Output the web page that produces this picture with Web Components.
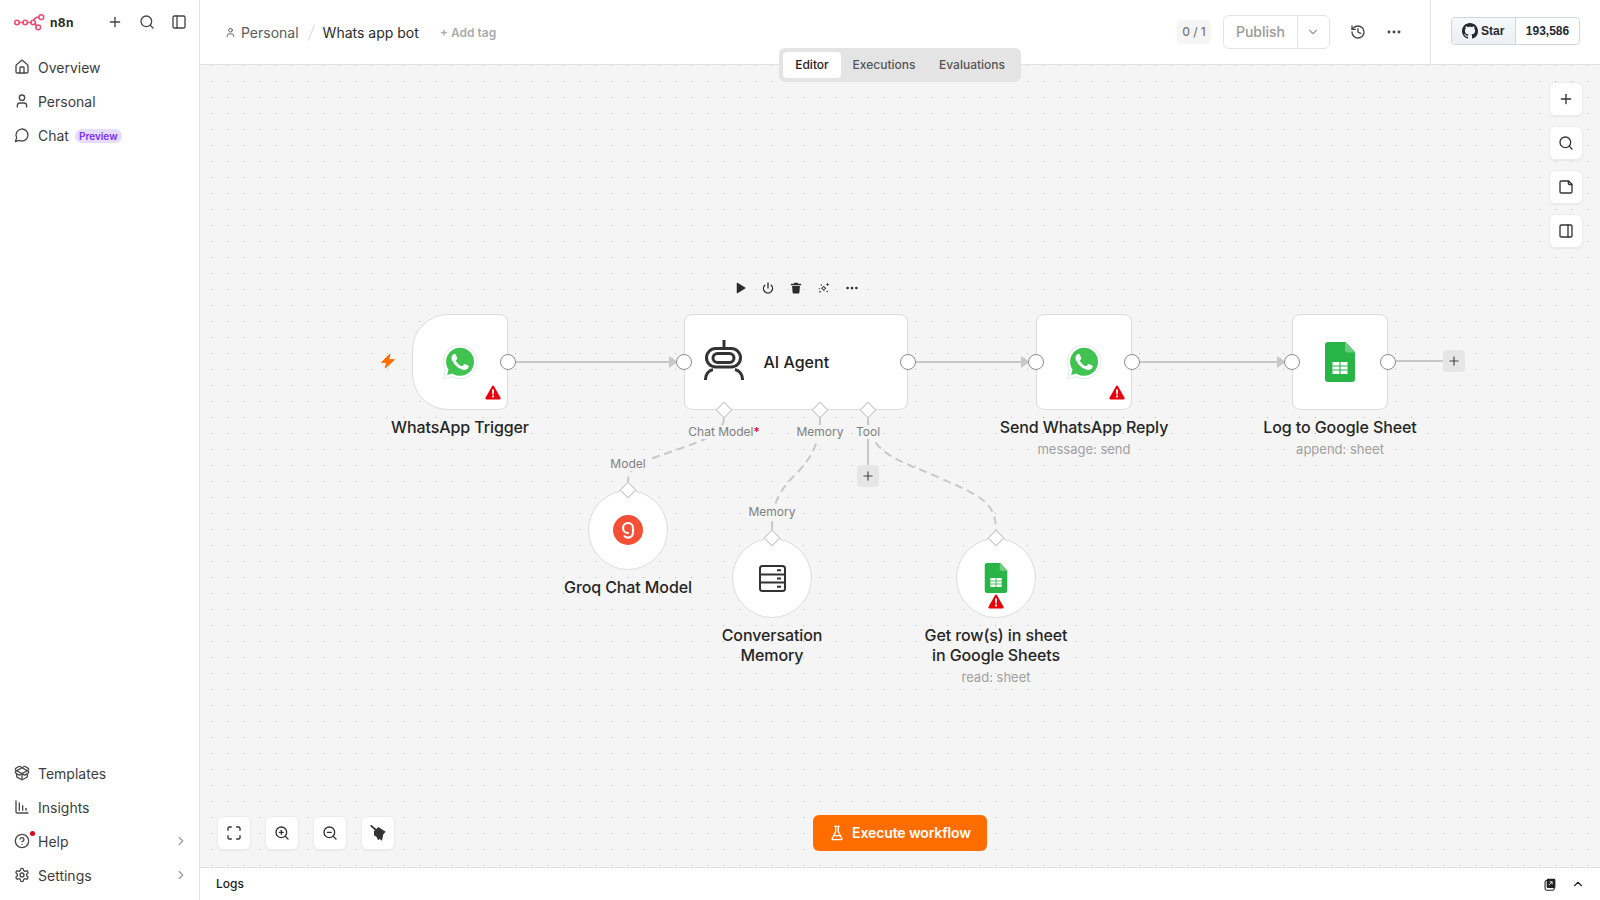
<!DOCTYPE html>
<html lang="en"><head><meta charset="utf-8"><title>Whats app bot - n8n</title>
<style>
html,body{margin:0;height:100%;overflow:hidden;background:#fff;font-family:Inter,"Liberation Sans",sans-serif;color:#333}
</style></head>
<body>
<n8n-app>
  <app-sidebar slot="side">
    <nav-item slot="top" icon="house">Overview</nav-item>
    <nav-item slot="top" icon="user">Personal</nav-item>
    <nav-item slot="top" icon="chat">Chat<ui-badge slot="after">Preview</ui-badge></nav-item>
    <nav-item slot="bottom" icon="package">Templates</nav-item>
    <nav-item slot="bottom" icon="chart">Insights</nav-item>
    <nav-item slot="bottom" icon="help" dot chevron>Help</nav-item>
    <nav-item slot="bottom" icon="settings" chevron>Settings</nav-item>
  </app-sidebar>
  <app-header slot="head"></app-header>
  <tab-switch slot="tabs"></tab-switch>
  <wf-canvas slot="canvas">
    <wf-edges></wf-edges>
    <wf-tag x="724" y="432">Chat Model<b style="color:#e8002a;font-weight:500">*</b></wf-tag>
    <wf-tag x="820" y="432">Memory</wf-tag>
    <wf-tag x="868" y="432">Tool</wf-tag>
    <wf-tag x="628" y="464">Model</wf-tag>
    <wf-tag x="772" y="512">Memory</wf-tag>

    <wf-node x="412" y="314" w="96" h="96" shape="trigger" warn="corner"><ui-icon slot="icon" name="whatsapp" size="34"></ui-icon>WhatsApp Trigger</wf-node>
    <wf-node x="684" y="314" w="224" h="96" shape="wide"><ui-icon slot="icon" name="robot" size="40" style="margin-top:-4px"></ui-icon><span slot="inline">AI Agent</span></wf-node>
    <wf-node x="1036" y="314" w="96" h="96" warn="corner"><ui-icon slot="icon" name="whatsapp" size="34"></ui-icon>Send WhatsApp Reply<span slot="sub">message: send</span></wf-node>
    <wf-node x="1292" y="314" w="96" h="96"><ui-icon slot="icon" name="sheets" size="40"></ui-icon>Log to Google Sheet<span slot="sub">append: sheet</span></wf-node>
    <wf-node x="588" y="490" w="80" h="80" shape="circle"><ui-icon slot="icon" name="groq" size="30"></ui-icon>Groq Chat Model</wf-node>
    <wf-node x="732" y="538" w="80" h="80" shape="circle"><ui-icon slot="icon" name="db" size="27"></ui-icon>Conversation<br>Memory</wf-node>
    <wf-node x="956" y="538" w="80" h="80" shape="circle" warn="center"><ui-icon slot="icon" name="sheets" size="30"></ui-icon>Get row(s) in sheet<br>in Google Sheets<span slot="sub">read: sheet</span></wf-node>

    <wf-port x="508" y="362"></wf-port><wf-port x="684" y="362"></wf-port><wf-port x="908" y="362"></wf-port>
    <wf-port x="1036" y="362"></wf-port><wf-port x="1132" y="362"></wf-port><wf-port x="1292" y="362"></wf-port><wf-port x="1388" y="362"></wf-port>
    <wf-port x="724" y="410" diamond></wf-port><wf-port x="820" y="410" diamond></wf-port><wf-port x="868" y="410" diamond></wf-port>
    <wf-port x="628" y="490" diamond></wf-port><wf-port x="772" y="538" diamond></wf-port><wf-port x="996" y="538" diamond></wf-port>

    <wf-add x="868" y="476"></wf-add><wf-add x="1454" y="361"></wf-add>
    <wf-bolt></wf-bolt>
    <node-toolbar></node-toolbar>

    <ctl-group side="right">
      <ctl-btn icon="plus"></ctl-btn><ctl-btn icon="search"></ctl-btn><ctl-btn icon="note"></ctl-btn><ctl-btn icon="panelright"></ctl-btn>
    </ctl-group>
    <ctl-group side="left">
      <ctl-btn icon="fit"></ctl-btn><ctl-btn icon="zoomin"></ctl-btn><ctl-btn icon="zoomout"></ctl-btn><ctl-btn icon="broom"></ctl-btn>
    </ctl-group>
    <exec-button>Execute workflow</exec-button>
  </wf-canvas>
  <logs-bar slot="logs"></logs-bar>
</n8n-app>

<script>
const S=(d,extra='')=>`<g fill="none" stroke="currentColor" stroke-width="2" stroke-linecap="round" stroke-linejoin="round" ${extra}>${d}</g>`;
const L=(...p)=>p.map(x=>x[0]==='<'?x:`<path d="${x}"/>`).join('');
const ICONS={
 plus:[24,S(L('M5 12h14','M12 5v14'))],
 search:[24,S(L('<circle cx="11" cy="11" r="8"/>','m21 21-4.3-4.3'))],
 panelleft:[24,S(L('<rect x="3" y="3" width="18" height="18" rx="2"/>','M9 3v18'))],
 panelright:[24,S(L('<rect x="3" y="3" width="18" height="18" rx="2"/>','M15 3v18'))],
 house:[24,S(L('M15 21v-8a1 1 0 0 0-1-1h-4a1 1 0 0 0-1 1v8','M3 10a2 2 0 0 1 .709-1.528l7-5.999a2 2 0 0 1 2.582 0l7 5.999A2 2 0 0 1 21 10v9a2 2 0 0 1-2 2H5a2 2 0 0 1-2-2z'))],
 user:[24,S(L('M19 21v-2a4 4 0 0 0-4-4H9a4 4 0 0 0-4 4v2','<circle cx="12" cy="7" r="4"/>'))],
 chat:[24,S(L('M7.9 20A9 9 0 1 0 4 16.1L2 22Z'))],
 package:[24,S(L('M12 22v-9','M15.17 2.21a1.67 1.67 0 0 1 1.63 0L21 4.57a1.93 1.93 0 0 1 0 3.36L8.82 14.79a1.655 1.655 0 0 1-1.64 0L3 12.43a1.93 1.93 0 0 1 0-3.36z','M20 13v3.87a2.06 2.06 0 0 1-1.11 1.83l-6 3.08a1.93 1.93 0 0 1-1.78 0l-6-3.08A2.06 2.06 0 0 1 4 16.87V13','M21 12.43a1.93 1.93 0 0 0 0-3.36L8.83 2.2a1.64 1.64 0 0 0-1.63 0L3 4.57a1.93 1.93 0 0 0 0 3.36l12.18 6.86a1.636 1.636 0 0 0 1.63 0z'))],
 chart:[24,S(L('M3 3v16a2 2 0 0 0 2 2h16','M8 17V6','M13 17v-7','M18 17v-3'))],
 help:[24,S(L('<circle cx="12" cy="12" r="10"/>','M9.09 9a3 3 0 0 1 5.83 1c0 2-3 3-3 3','M12 17h.01'))],
 settings:[24,S(L('M12.22 2h-.44a2 2 0 0 0-2 2v.18a2 2 0 0 1-1 1.73l-.43.25a2 2 0 0 1-2 0l-.15-.08a2 2 0 0 0-2.73.73l-.22.38a2 2 0 0 0 .73 2.73l.15.1a2 2 0 0 1 1 1.72v.51a2 2 0 0 1-1 1.74l-.15.09a2 2 0 0 0-.73 2.73l.22.38a2 2 0 0 0 2.73.73l.15-.08a2 2 0 0 1 2 0l.43.25a2 2 0 0 1 1 1.73V20a2 2 0 0 0 2 2h.44a2 2 0 0 0 2-2v-.18a2 2 0 0 1 1-1.73l.43-.25a2 2 0 0 1 2 0l.15.08a2 2 0 0 0 2.73-.73l.22-.39a2 2 0 0 0-.73-2.73l-.15-.08a2 2 0 0 1-1-1.74v-.5a2 2 0 0 1 1-1.74l.15-.09a2 2 0 0 0 .73-2.73l-.22-.38a2 2 0 0 0-2.73-.73l-.15.08a2 2 0 0 1-2 0l-.43-.25a2 2 0 0 1-1-1.73V4a2 2 0 0 0-2-2z','<circle cx="12" cy="12" r="3"/>'))],
 right:[24,S(L('m9 18 6-6-6-6'))],
 down:[24,S(L('m6 9 6 6 6-6'))],
 up:[24,S(L('m18 15-6-6-6 6'))],
 history:[24,S(L('M3 12a9 9 0 1 0 9-9 9.75 9.75 0 0 0-6.74 2.74L3 8','M3 3v5h5','M12 7v5l4 2'))],
 dots:[24,'<g fill="currentColor"><circle cx="4.5" cy="12" r="2.2"/><circle cx="12" cy="12" r="2.2"/><circle cx="19.5" cy="12" r="2.2"/></g>'],
 note:[24,S(L('M16 3H5a2 2 0 0 0-2 2v14a2 2 0 0 0 2 2h14a2 2 0 0 0 2-2V8Z','M15.5 3.5v2a3 3 0 0 0 3 3h2'))],
 fit:[24,S(L('M8 3H5a2 2 0 0 0-2 2v3','M21 8V5a2 2 0 0 0-2-2h-3','M3 16v3a2 2 0 0 0 2 2h3','M16 21h3a2 2 0 0 0 2-2v-3'))],
 zoomin:[24,S(L('<circle cx="11" cy="11" r="8"/>','m21 21-4.3-4.3','M11 8v6','M8 11h6'))],
 zoomout:[24,S(L('<circle cx="11" cy="11" r="8"/>','m21 21-4.3-4.3','M8 11h6'))],
 broom:[24,'<path d="M1.8 1.2 9 7.5" stroke="currentColor" stroke-width="2.6" stroke-linecap="round"/><path fill="currentColor" d="M6 9.500 12.500 3 23.500 10 20 14 18 23.500 14.500 21 12 23 10 18 6 15.500Z"/>'],
 flask:[24,S(L('M10 2v7.527a2 2 0 0 1-.211.896L4.72 20.55a1 1 0 0 0 .9 1.45h12.76a1 1 0 0 0 .9-1.45l-5.069-10.127A2 2 0 0 1 14 9.527V2','M8.5 2h7','M7 16h10'))],
 popout:[24,'<rect x="2" y="4.5" width="17" height="18" rx="3" fill="#fff" stroke="currentColor" stroke-width="2"/><rect x="5" y="1.5" width="16" height="17" rx="2" fill="currentColor"/><path d="M9 13l6-6M10.5 7H15v4.5" fill="none" stroke="#fff" stroke-width="1.6"/>'],
 play:[24,'<path fill="currentColor" d="M5.5 2.4v19.2a1 1 0 0 0 1.5.85l15.4-9.6a1 1 0 0 0 0-1.7L7 1.55a1 1 0 0 0-1.5.85Z"/>'],
 power:[24,S(L('M12 2v10','M18.4 6.6a9 9 0 1 1-12.77.04'),'style="stroke-width:2.6"')],
 trash:[24,'<path fill="currentColor" d="M8.6 1.5h6.8l.7 1.8H21a1 1 0 0 1 0 3H3a1 1 0 0 1 0-3h4.9ZM4.2 8h15.6l-1 13.2a2 2 0 0 1-2 1.8H7.2a2 2 0 0 1-2-1.8Z"/>'],
 sparkle:[24,'<g fill="currentColor"><path d="M11.500 8 13 11 16 12.500 13 14 11.500 17 10 14 7 12.500 10 11Z" fill="none" stroke="currentColor" stroke-width="2" stroke-linejoin="round"/><path d="M19 1.500l1.200 2.300 2.300 1.200-2.300 1.200L19 8.500l-1.200-2.300L15.500 5l2.300-1.200Z"/><circle cx="6.500" cy="6" r="1.300"/><circle cx="4" cy="19.500" r="1.700"/><circle cx="18.500" cy="19" r="1.500"/><circle cx="2.500" cy="13" r="1"/></g>'],
 user2:[24,S(L('M19 21v-2a4 4 0 0 0-4-4H9a4 4 0 0 0-4 4v2','<circle cx="12" cy="7" r="4"/>'))],
 bolt:[24,'<path fill="currentColor" stroke="currentColor" stroke-width="1.500" stroke-linejoin="round" d="M15 1.500 2.500 14H10L8 22.500 21.500 10H13Z"/>'],
 warn:[16,'<path fill="#e8000b" d="M8 .6c.4 0 .8.2 1 .6l6.500 11.500c.4.800-.1 1.700-1 1.700h-13c-.9 0-1.400-.9-1-1.700L7 1.200c.2-.4.6-.6 1-.6Z"/><path fill="#fff" d="M7 4.600h2l-.3 5H7.300ZM8 10.300a1.100 1.100 0 1 1 0 2.200 1.100 1.100 0 0 1 0-2.200Z"/>'],
 whatsapp:[24,'<path fill="#fff" stroke="#d6dede" stroke-width=".5" d="M20.464 3.488A11.815 11.815 0 0 0 12.050 0C5.495 0 .160 5.335.157 11.892c0 2.096.547 4.142 1.588 5.945L.057 24l6.305-1.654a11.882 11.882 0 0 0 5.683 1.448h.005c6.554 0 11.890-5.335 11.893-11.893a11.821 11.821 0 0 0-3.480-8.413z"/><path fill="#40c351" d="M12.051 21.785h-.004a9.87 9.870 0 0 1-5.031-1.378l-.361-.214-3.741.982.998-3.648-.235-.374a9.860 9.860 0 0 1-1.510-5.260c.001-5.450 4.436-9.884 9.888-9.884 2.640 0 5.122 1.030 6.988 2.898a9.825 9.825 0 0 1 2.893 6.994c-.003 5.450-4.437 9.884-9.885 9.884z"/><path fill="#fff" d="M17.472 14.382c-.297-.149-1.758-.867-2.030-.967-.273-.099-.471-.148-.670.150-.197.297-.767.966-.940 1.164-.173.199-.347.223-.644.075-.297-.150-1.255-.463-2.390-1.475-.883-.788-1.480-1.761-1.653-2.059-.173-.297-.018-.458.130-.606.134-.133.298-.347.446-.520.149-.174.198-.298.298-.497.099-.198.050-.371-.025-.520-.075-.149-.669-1.612-.916-2.207-.242-.579-.487-.500-.669-.510-.173-.008-.371-.010-.570-.010-.198 0-.520.074-.792.372-.272.297-1.040 1.016-1.040 2.479 0 1.462 1.065 2.875 1.213 3.074.149.198 2.096 3.200 5.077 4.487.709.306 1.262.489 1.694.625.712.227 1.360.195 1.871.118.571-.085 1.758-.719 2.006-1.413.248-.694.248-1.289.173-1.413-.074-.124-.272-.198-.570-.347z"/>'],
 sheets:[40,'<path fill="#28b446" d="M12 0H25.500L35 10V37a3 3 0 0 1-3 3H8a3 3 0 0 1-3-3V3a3 3 0 0 1 3-3Z"/><path fill="#6ace7c" d="M25 0 35 10.500H28a3 3 0 0 1-3-3Z"/><path fill="#fff" d="M12.500 20h15v12h-15Z"/><path fill="none" stroke="#28b446" stroke-width="1.100" d="M12.500 24h15M12.500 28h15M20 20v12"/>'],
 groq:[30,'<circle cx="15" cy="15" r="15" fill="#f55036"/><path fill="none" stroke="#fff" stroke-width="2.200" stroke-linecap="round" d="M15 18c-2.900 0-5-2.200-5-5s2.200-5 5-5 5 2.200 5 5v4.600c0 2.800-2.200 5-5 5-1.300 0-2.500-.5-3.400-1.300"/>'],
 db:[27,'<g fill="none" stroke="#333" stroke-width="2"><rect x="1" y="1" width="25" height="25" rx="2.500"/><path d="M1 9.400h25M1 17.600h25"/><path d="M18 5.200h4M18 13.500h4M18 21.800h4"/></g>'],
 robot:[40,'<g fill="none" stroke="#333" stroke-width="3"><path d="M20 0v8"/><rect x="2.500" y="8.500" width="34" height="18.500" rx="9.250"/><rect x="9" y="13.500" width="21" height="9" rx="4.500"/><path d="M1.500 40v-1c0-4.500 3.200-8.500 7.500-9.500M38.500 40v-1c0-4.500-3.200-8.500-7.500-9.500"/></g>'],
 github:[16,'<path fill="currentColor" d="M8 0C3.580 0 0 3.580 0 8c0 3.540 2.290 6.530 5.470 7.590.4.070.550-.170.550-.380 0-.190-.010-.820-.010-1.490-2.010.370-2.530-.490-2.690-.940-.090-.230-.480-.940-.820-1.130-.280-.150-.680-.520-.010-.530.630-.010 1.080.580 1.230.820.720 1.210 1.870.870 2.330.660.070-.520.280-.870.510-1.070-1.780-.2-3.640-.890-3.640-3.950 0-.870.310-1.590.820-2.150-.080-.2-.360-1.020.080-2.120 0 0 .670-.210 2.200.820.640-.180 1.320-.270 2-.270.680 0 1.360.090 2 .270 1.530-1.040 2.200-.820 2.200-.820.440 1.100.160 1.920.080 2.120.510.560.820 1.270.820 2.150 0 3.070-1.870 3.750-3.650 3.950.290.250.540.730.540 1.480 0 1.070-.010 1.930-.010 2.200 0 .210.150.460.550.380A8.013 8.013 0 0 0 16 8c0-4.420-3.580-8-8-8z"/>'],
 logo:[[31,17],'<g fill="none" stroke="#ea4b71" stroke-width="1.500" stroke-linecap="round"><circle cx="3" cy="8.500" r="2.200"/><circle cx="11.200" cy="8.500" r="2.200"/><circle cx="19.200" cy="8.500" r="2.200"/><path d="M5.200 8.500h3.800M13.400 8.500h3.600"/><circle cx="27.300" cy="3.200" r="2.400"/><circle cx="24.200" cy="13.300" r="2.400"/><path d="M24.900 3.200h-1.700c-1.900 0-2.700 1-3.200 3.200M21.200 9.200c.9.500.6 1.900 1.300 2.800"/></g>'],
};
const svg=(n,size,h)=>{const [vb,b]=ICONS[n];const vw=Array.isArray(vb)?vb[0]:vb,vh=Array.isArray(vb)?vb[1]:vb;return `<svg xmlns="http://www.w3.org/2000/svg" width="${size}" height="${h||size}" viewBox="0 0 ${vw} ${vh}" style="display:block;flex:none">${b}</svg>`};
const CX=200,CY=65;
function define(tag,css,html,init){
  customElements.define(tag,class extends HTMLElement{
    constructor(){super();this.attachShadow({mode:'open'})}
    connectedCallback(){
      const a=n=>this.getAttribute(n),has=n=>this.hasAttribute(n);
      this.shadowRoot.innerHTML=`<style>${css}</style>`+(typeof html==='function'?html(a,has):html);
      if(init)init.call(this,a,has);
    }
  });
}
const place=function(a){this.style.left=(a('x')-CX)+'px';this.style.top=(a('y')-CY)+'px'};

define('n8n-app',`:host{display:grid;grid-template-columns:200px 1fr;grid-template-rows:65px 1fr 33px;width:100vw;height:100vh;position:relative}
 ::slotted([slot=side]){grid-row:1/4}
 .t{position:absolute;left:779px;top:48px;z-index:5}`,
 `<slot name="side"></slot><slot name="head"></slot><slot name="canvas"></slot><slot name="logs"></slot><div class="t"><slot name="tabs"></slot></div>`);

define('ui-icon',`:host{display:block;line-height:0}`,(a)=>svg(a('name'),+a('size')||16));

define('app-sidebar',`:host{display:flex;flex-direction:column;box-sizing:border-box;width:200px;height:100vh;border-right:1px solid #e2e2e2;background:#fff;grid-row:1/4;padding-bottom:8px}
 .brand{display:flex;align-items:center;height:44px;padding-left:14px;color:#3a3a3a}
 .name{font:700 12px Inter,sans-serif;margin-left:5px;letter-spacing:.3px;color:#2b2b2b}
 .acts{margin-left:auto;display:flex;gap:16px;padding-right:12px;color:#444}
 .top{margin-top:6px;display:flex;flex-direction:column}
 .sp{flex:1}.bot{display:flex;flex-direction:column}`,
 `<div class="brand">${svg('logo',31,17)}<span class="name">n8n</span><div class="acts">${svg('plus',16)}${svg('search',16)}${svg('panelleft',16)}</div></div>
  <div class="top"><slot name="top"></slot></div><div class="sp"></div><div class="bot"><slot name="bottom"></slot></div>`);

define('nav-item',`:host{display:flex;align-items:center;height:34px;padding-left:14px;font:400 14px Inter,sans-serif;color:#3d3d3d;position:relative}
 .i{width:16px;margin-right:8px;color:#4a4a4a;position:relative}
 .dot{position:absolute;left:16px;top:-2px;width:5px;height:5px;border-radius:50%;background:#e8001c}
 .c{margin-left:auto;margin-right:11px;color:#9a9a9a}`,
 (a,has)=>`<div class="i">${svg(a('icon'),16)}${has('dot')?'<span class="dot"></span>':''}</div><slot></slot><slot name="after"></slot>${has('chevron')?`<div class="c">${svg('right',14)}</div>`:''}`);

define('ui-badge',`:host{display:inline-block;margin:1px 0 0 6px;padding:0 4px;height:14px;border-radius:8px;background:#e6dcff;color:#7a2df0;font:600 10px/14px Inter,sans-serif}`,`<slot></slot>`);

define('app-header',`:host{display:flex;align-items:center;height:65px;box-sizing:border-box;border-bottom:1px solid #e2e2e2;padding:0 20px 0 25px;background:#fff;font:400 14px Inter,sans-serif}
 .crumb{display:flex;align-items:center}
 .u{color:#555;margin-right:5px}
 .p{color:#5c5c5c}.s{width:9px;height:17px;margin:0 7px 0 8px;color:#dfdfdf}.w{color:#2b2b2b}
 .tag{margin-left:21px;font:600 12px Inter,sans-serif;color:#aaa}
 .r{margin-left:auto;display:flex;align-items:center}
 .cnt{box-sizing:border-box;width:34px;height:24px;background:#f5f5f5;border-radius:4px;color:#7a7a7a;font:500 12px/24px Inter,sans-serif;text-align:center;margin-right:12px}
 .pub{display:flex;height:34px;box-sizing:border-box;border:1px solid #e4e4e4;border-radius:6px;color:#999;font:500 14px/32px Inter,sans-serif;width:107px}
 .pub span{width:73px;text-align:center;border-right:1px solid #e4e4e4}
 .pub i{flex:1;display:flex;align-items:center;justify-content:center;padding-right:1px}
 .ic{color:#444;margin-left:20px}
 .vr{width:1px;height:64px;background:#e4e4e4;margin:0 20px 0 28px}
 .gh{display:flex;height:28px;box-sizing:border-box;border:1px solid #cfd7de;border-radius:4px;font:700 12px/26px "Liberation Sans",sans-serif;color:#24292f;width:129px;margin-top:-2px}
 .st{display:flex;align-items:center;gap:3px;width:64px;box-sizing:border-box;padding-left:10px;background:linear-gradient(#f6f8fa,#ebf0f4);border-right:1px solid #cfd7de;border-radius:3px 0 0 3px}
 .n{flex:1;text-align:center}`,
 `<div class="crumb"><div class="u">${svg('user2',11)}</div><span class="p">Personal</span>
   <svg class="s" viewBox="0 0 9 17"><path d="M7.500 .5 1.500 16.500" stroke="currentColor" stroke-width="1.200" fill="none"/></svg>
   <span class="w">Whats app bot</span><span class="tag">+ Add tag</span></div>
  <div class="r"><span class="cnt">0 / 1</span>
   <div class="pub"><span>Publish</span><i>${svg('down',14)}</i></div>
   <div class="ic" style="margin-left:20px">${svg('history',16)}</div><div class="ic">${svg('dots',16)}</div>
   <div class="vr"></div>
   <div class="gh"><div class="st">${svg('github',16)}<span>Star</span></div><div class="n">193,586</div></div></div>`);

define('tab-switch',`:host{display:flex;box-sizing:border-box;width:242px;height:34px;padding:4px;background:#e4e4e4;border-radius:6px;font:500 12px/26px Inter,sans-serif;color:#555}
 .on{background:#fff;color:#222;width:58px;text-align:center;border-radius:4px}
 .b{width:86px;text-align:center}.c{width:90px;text-align:center}`,
 `<div class="on">Editor</div><div class="b">Executions</div><div class="c">Evaluations</div>`);

define('wf-canvas',`:host{display:block;position:relative;overflow:hidden;background-color:#f5f5f5;background-image:radial-gradient(circle at .5px .5px,#b6b6b6 .55px,transparent .75px);background-size:16px 16px;background-position:11px 0}`,`<slot></slot>`);

define('wf-edges',`:host{position:absolute;inset:0;display:block}svg{display:block;position:absolute;inset:0}`,
 `<svg width="1400" height="802" viewBox="200 65 1400 802">
  <g fill="none" stroke="#c8c8c8" stroke-width="2">
   <path d="M516 362H670M916 362H1022M1140 362H1278M1396 361H1443M868 418V465"/>
   <g stroke-dasharray="8 5">
    <path d="M724 418C724 436 692 444 676 450C650 460 628 462 628 482"/>
    <path d="M820 418C820 450 805 465 790 480C775 497 772 510 772 530"/>
    <path d="M868 418C868 455 905 462 940 478C975 494 996 500 996 530"/>
   </g></g>
  <g fill="#c8c8c8"><path d="M669 356 678 362 669 368Z"/><path d="M1021 356 1030 362 1021 368Z"/><path d="M1277 356 1286 362 1277 368Z"/></g>
 </svg>`);

define('wf-tag',`:host{position:absolute;transform:translate(-50%,-50%);font:400 12px/14px Inter,sans-serif;color:#808080;background:#f5f5f5;padding:0 2px;white-space:nowrap}`,`<slot></slot>`,place);

define('wf-node',`:host{position:absolute;display:block}
 .box{position:absolute;inset:0;box-sizing:border-box;background:#fff;border:1.5px solid #dcdcdc;border-radius:8px;display:flex;align-items:center;justify-content:center}
 .trigger{border-radius:36px 8px 8px 36px}.circle{border-radius:50%}
 .wide{justify-content:flex-start;padding-left:18.500px;gap:20px;font:500 16px Inter,sans-serif;color:#222}
 .warn{position:absolute}
 .corner{right:6.500px;bottom:8px}
 .center{left:50%;transform:translateX(-50%);top:55px}
 .label{position:absolute;top:100%;left:50%;transform:translateX(-50%);margin-top:7px;width:max-content;text-align:center;font:500 16px/20px Inter,sans-serif;color:#262626;letter-spacing:-.1px}
 .sub{display:block;font:400 13px/14px Inter,sans-serif;color:#a0a0a0;margin-top:5px;letter-spacing:0}`,
 (a)=>`<div class="box ${a('shape')||''}"><slot name="icon"></slot><slot name="inline"></slot>${a('warn')?`<div class="warn ${a('warn')}">${svg('warn',16)}</div>`:''}</div>
  <div class="label"><slot></slot><slot name="sub" class="sub"></slot></div>`,
 function(a){place.call(this,a);this.style.width=a('w')+'px';this.style.height=a('h')+'px';
   const s=this.shadowRoot.querySelector('.sub'); if(!this.querySelector('[slot=sub]')) s.style.display='none';});

define('wf-port',`:host{position:absolute;display:block;width:0;height:0}
 div{position:absolute;box-sizing:border-box;background:#fff}
 .c{left:-8px;top:-8px;width:16px;height:16px;border:1px solid #8c8c8c;border-radius:50%}
 .d{left:-6px;top:-6px;width:12px;height:12px;border:1px solid #c4c4c4;transform:rotate(45deg)}`,
 (a,has)=>`<div class="${has('diamond')?'d':'c'}"></div>`,place);

define('wf-add',`:host{position:absolute;width:22px;height:22px;margin:-11px 0 0 -11px;background:#e6e6e6;border-radius:4px;display:flex;align-items:center;justify-content:center;color:#444}`,svg('plus',14),place);

define('wf-bolt',`:host{position:absolute;left:180px;top:287.500px;color:#ff6d00;width:16px;height:16px;display:block}`,svg('bolt',16));

define('node-toolbar',`:host{position:absolute;left:526px;top:209px;display:flex;height:28px;color:#2b2b2b}
 div{width:28px;display:flex;align-items:center;justify-content:center}`,
 ['play','power','trash','sparkle','dots'].map(n=>`<div>${svg(n,n==='dots'?14:12)}</div>`).join(''));

define('ctl-group',`:host{position:absolute;display:flex}
 :host([side=right]){right:17px;top:17px;flex-direction:column;gap:10px}
 :host([side=left]){left:17px;bottom:17px;gap:14px}`,`<slot></slot>`);

define('ctl-btn',`:host{display:flex;align-items:center;justify-content:center;width:34px;height:34px;box-sizing:border-box;background:#fff;border:1px solid #ececec;border-radius:6px;box-shadow:0 1px 2px rgba(0,0,0,.06);color:#333}`,(a)=>svg(a('icon'),16));

define('exec-button',`:host{position:absolute;left:613px;bottom:16px;box-sizing:border-box;width:174px;height:36px;padding-bottom:1px;display:flex;align-items:center;justify-content:center;gap:7px;background:#ff6d00;border-radius:6px;color:#fff;font:600 14px Inter,sans-serif;letter-spacing:-.12px}`,()=>`${svg('flask',16)}<slot></slot>`);

define('logs-bar',`:host{display:flex;align-items:center;box-sizing:border-box;height:33px;border-top:1px solid #e2e2e2;padding:0 15px 2px 16px;background:#fff;font:500 12px Inter,sans-serif;color:#222}
 .a{margin-left:auto;display:flex;align-items:center;gap:14px;margin-top:2px}`,
 `<span>Logs</span><div class="a">${svg('popout',13)}${svg('up',14)}</div>`);
</script>
</body></html>
